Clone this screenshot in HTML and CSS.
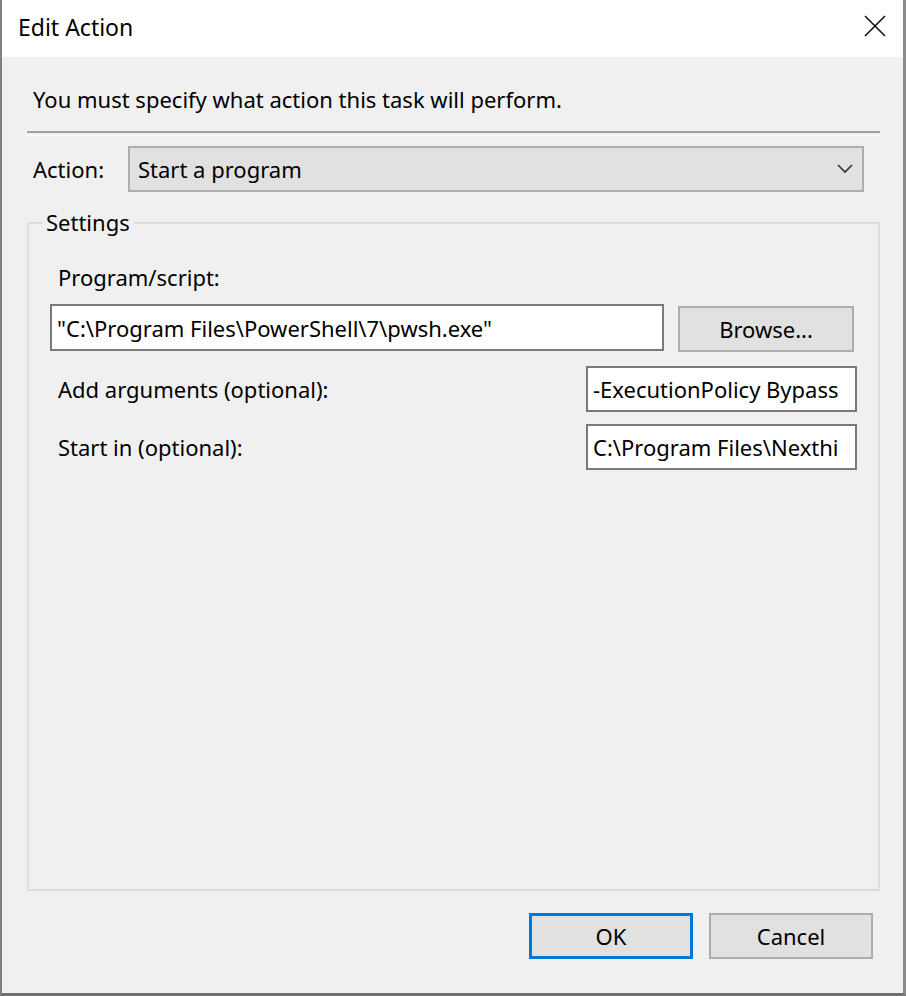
FILE: index.html
```html
<!DOCTYPE html>
<html>
<head>
<meta charset="utf-8">
<link rel="stylesheet" href="styles.css">
</head>
<body>
<div class="window">
  <div class="titlebar">
    <span class="title">Edit Action</span>
    <span class="close">
      <svg width="22" height="22" viewBox="0 0 22 22"><path d="M1 1 L21 21 M21 1 L1 21" stroke="#111" stroke-width="1.6" fill="none"/></svg>
    </span>
  </div>
  <div class="content">
    <div class="intro">You must specify what action this task will perform.</div>
    <div class="separator"></div>
    <div class="action-row">
      <span class="action-label">Action:</span>
      <div class="combo">
        <span>Start a program</span>
        <svg width="16" height="10" viewBox="0 0 16 10"><path d="M1 1 L8 8 L15 1" stroke="#333" stroke-width="1.6" fill="none"/></svg>
      </div>
    </div>
    <div class="group">
      <span class="group-label">Settings</span>
      <div class="field-label prog-label">Program/script:</div>
      <div class="prog-row">
        <div class="input prog-input">"C:\Program Files\PowerShell\7\pwsh.exe"</div>
        <div class="button browse">Browse...</div>
      </div>
      <div class="opt-row args-row">
        <span class="field-label">Add arguments (optional):</span>
        <div class="input small-input">-ExecutionPolicy Bypass</div>
      </div>
      <div class="opt-row start-row">
        <span class="field-label">Start in (optional):</span>
        <div class="input small-input">C:\Program Files\Nexthi</div>
      </div>
    </div>
    <div class="buttons">
      <div class="button ok">OK</div>
      <div class="button cancel">Cancel</div>
    </div>
  </div>
</div>
</body>
</html>
```
FILE: styles.css
```css
* { box-sizing: border-box; }
html, body { margin: 0; padding: 0; background: #f0f0f0; }
body {
  font-family: "Noto Sans", "Open Sans", sans-serif;
  font-size: 22px;
  color: #000;
}
.window {
  width: 906px;
  height: 996px;
  border-left: 2px solid #808080;
  border-right: 3px solid #8a8a8a;
  border-bottom: 3px solid #707070;
  display: flex;
  flex-direction: column;
  background: #f0f0f0;
}
.titlebar {
  height: 57px;
  background: #fff;
  display: flex;
  align-items: center;
  justify-content: space-between;
  padding: 0 17px 0 16px;
  flex: none;
}
.title { font-size: 23px; line-height: 1; margin-top: -2px; }
.close { display: flex; width: 22px; height: 22px; margin-top: -6px; }
.content {
  flex: 1;
  display: flex;
  flex-direction: column;
  padding: 0 22px 0 25px;
}
.intro {
  margin-top: 29px;
  padding-left: 6px;
  line-height: 26px;
  height: 26px;
}
.separator {
  margin-top: 19px;
  height: 2px;
  border-top: 2px solid #a0a0a0;
  border-bottom: 1px solid #fff;
  margin-right: 1px;
  box-sizing: content-box;
}
.action-row {
  display: flex;
  align-items: center;
  margin-top: 10px;
  height: 46px;
}
.action-label { padding-left: 6px; width: 101px; flex: none; }
.combo {
  flex: none;
  width: 736px;
  height: 46px;
  background: #e1e1e1;
  border: 2px solid #adadad;
  display: flex;
  align-items: center;
  justify-content: space-between;
  padding: 0 9px 0 8px;
}
.group {
  position: relative;
  margin-top: 30px;
  height: 669px;
  border: 2px solid #dcdcdc;
  margin-right: 1px;
  padding: 0 24px 0 21px;
}
.group-label {
  position: absolute;
  top: -16px;
  left: 13px;
  padding: 0 4px;
  background: #f0f0f0;
  line-height: 28px;
}
.field-label { padding-left: 8px; }
.prog-label { margin-top: 39px; line-height: 28px; }
.prog-row {
  display: flex;
  align-items: flex-start;
  margin-top: 13px;
  justify-content: space-between;
}
.input {
  background: #fff;
  border: 2px solid #7a7a7a;
  display: flex;
  align-items: center;
  padding: 0 5px;
  white-space: nowrap;
  overflow: hidden;
}
.prog-input { width: 614px; height: 47px; }
.button {
  background: #e1e1e1;
  border: 2px solid #adadad;
  display: flex;
  align-items: center;
  justify-content: center;
}
.browse { width: 176px; height: 46px; margin-top: 2px; }
.opt-row {
  display: flex;
  align-items: center;
  justify-content: space-between;
  margin-right: -3px;
}
.args-row { margin-top: 14px; }
.start-row { margin-top: 12px; }
.small-input { width: 271px; height: 46px; padding: 0 5px; }
.buttons {
  display: flex;
  justify-content: flex-end;
  gap: 16px;
  margin-top: 22px;
  padding-right: 8px;
}
.ok { width: 164px; height: 46px; border: 3px solid #0078d7; }
.cancel { width: 164px; height: 46px; }
```
